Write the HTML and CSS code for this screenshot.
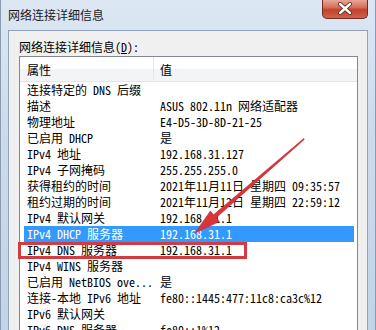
FILE: index.html
```html
<!DOCTYPE html>
<html lang="zh-CN">
<head>
    <meta charset="utf-8">
    <title>网络连接详细信息</title>
    <link rel="stylesheet" href="styles.css">
</head>
<body>
    <div class="window">
        <div class="titlebar">
            <span class="title">网络连接详细信息</span>
            <div class="close">
                <svg width="46" height="19" viewBox="0 0 46 19">
                    <path d="M18 5 L28 14 M28 5 L18 14" stroke="#5a1f18" stroke-width="4" stroke-linecap="round"/>
                    <path d="M18 5 L28 14 M28 5 L18 14" stroke="#fff" stroke-width="2.4" stroke-linecap="round"/>
                </svg>
            </div>
        </div>

        <div class="panel">
            <div class="label">网络连接详细信息(<u>D</u>):</div>
            <div class="list">
                <div class="list-head">
                    <div class="head-cell first">属性</div>
                    <div class="head-cell">值</div>
                </div>
                <div class="row"><span>连接特定的 DNS 后缀</span><span></span></div>
                <div class="row"><span>描述</span><span>ASUS 802.11n 网络适配器</span></div>
                <div class="row"><span>物理地址</span><span>E4-D5-3D-8D-21-25</span></div>
                <div class="row"><span>已启用 DHCP</span><span>是</span></div>
                <div class="row"><span>IPv4 地址</span><span>192.168.31.127</span></div>
                <div class="row"><span>IPv4 子网掩码</span><span>255.255.255.0</span></div>
                <div class="row"><span>获得租约的时间</span><span>2021年11月11日 星期四 09:35:57</span></div>
                <div class="row"><span>租约过期的时间</span><span>2021年11月12日 星期四 22:59:12</span></div>
                <div class="row"><span>IPv4 默认网关</span><span>192.168.31.1</span></div>
                <div class="row selected"><span>IPv4 DHCP 服务器</span><span>192.168.31.1</span></div>
                <div class="row"><span>IPv4 DNS 服务器</span><span>192.168.31.1</span></div>
                <div class="row"><span>IPv4 WINS 服务器</span><span></span></div>
                <div class="row"><span>已启用 NetBIOS ove...</span><span>是</span></div>
                <div class="row"><span>连接-本地 IPv6 地址</span><span>fe80::1445:477:11c8:ca3c%12</span></div>
                <div class="row"><span>IPv6 默认网关</span><span></span></div>
                <div class="row"><span>IPv6 DNS 服务器</span><span>fe80::1%12</span></div>
            </div>
        </div>

        <!-- annotation: box around the DNS row and the arrow -->
        <div class="mark"></div>
        <svg class="arrow" width="376" height="330" viewBox="0 0 376 330">
            <polygon points="304.3,139.4 216.2,217.7 219.4,221.5 195,233 210.4,210.9 213.6,214.7 303.7,138.6"
                     fill="#d8343a" stroke="#c02a30" stroke-width="0.6" stroke-linejoin="round"/>
        </svg>
    </div>
</body>
</html>
```

FILE: styles.css
```css
body {
    margin: 0;
    background-color: #fff;
}
.window {
    position: relative;
    width: 376px;
    height: 330px;
    overflow: hidden;
    background: linear-gradient(to bottom, #dce7f3 0%, #ccdbec 40%, #c3d4e8 100%);
    box-shadow: inset 1px 0 0 #8a9cb3, inset -1px 0 0 #8a9cb3;
    font-family: "Noto Sans Mono CJK SC", "Noto Sans CJK SC", "Liberation Mono", monospace;
    font-size: 12px;
    color: #000;
}
.titlebar {
    display: flex;
    align-items: flex-start;
    height: 30px;
}
.title {
    padding: 8px 0 0 8px;
    line-height: 14px;
    font-family: "Noto Sans CJK SC", sans-serif;
    color: #1a1a1a;
}
.close {
    margin-left: auto;
    margin-right: 8px;
    width: 46px;
    height: 19px;
    box-sizing: border-box;
    border: 1px solid #6e2c22;
    border-top: none;
    border-radius: 0 0 5px 5px;
    background: linear-gradient(to bottom, #e8a596 0%, #d7705c 40%, #c2412c 55%, #d0634c 100%);
}
.close svg {
    display: block;
    margin: -1px 0 0 -1px;
}
.panel {
    margin: 0 8px;
    height: 300px;
    box-sizing: border-box;
    padding: 0 9px 0 10px;
    background-color: #f0f0f0;
    border: 1px solid #8fa2b8;
    border-bottom: none;
}
.label {
    margin-top: 8px;
    line-height: 16px;
}
.list {
    margin-top: 1px;
    border: 1px solid #828790;
    background-color: #fff;
    height: 300px;
}
.list-head {
    display: flex;
    height: 24px;
    border-bottom: 1px solid #e5e5e5;
    background: linear-gradient(to bottom, #fff 50%, #f3f4f6 50%);
}
.head-cell {
    line-height: 25px;
    padding-left: 6px;
}
.head-cell.first {
    width: 126px;
    padding-left: 7px;
    border-right: 1px solid #e3e8ee;
}
.row {
    display: grid;
    grid-template-columns: 136px 1fr;
    height: 16px;
    line-height: 16px;
    margin: 0 3px 0 4px;
    white-space: nowrap;
}
.row span:first-child {
    padding-left: 3px;
}
.row.selected {
    background-color: #3399ff;
    color: #fff;
}
.mark {
    position: absolute;
    left: 18px;
    top: 242px;
    width: 229px;
    height: 17px;
    box-sizing: border-box;
    border: 3px solid #d23b40;
}
.arrow {
    position: absolute;
    left: 0;
    top: 0;
    pointer-events: none;
}
```
